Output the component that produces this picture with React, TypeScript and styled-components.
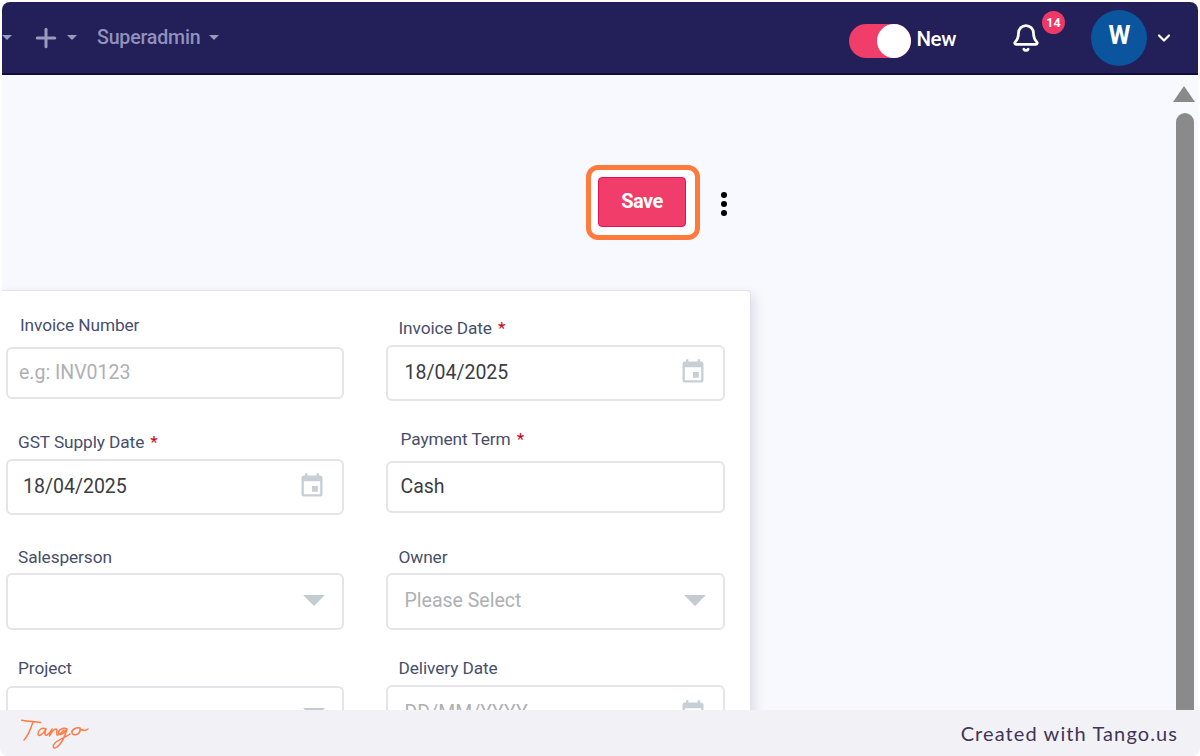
import styled, { createGlobalStyle } from "styled-components";
import { MdEvent } from "react-icons/md";
import { Bell, ChevronDown, Plus } from "lucide-react";

const GlobalStyle = createGlobalStyle`
  html, body {
    margin: 0;
    background: #ffffff;
    font-family: Roboto, "Liberation Sans", sans-serif;
  }
  * {
    box-sizing: border-box;
  }
`;

const Frame = styled.div`
  width: 1200px;
  height: 756px;
  display: flex;
  flex-direction: column;
  overflow: hidden;
  background: #ffffff;
`;

const Screen = styled.div`
  height: 708px;
  margin: 2px 2px 0;
  display: flex;
  flex-direction: column;
  overflow: hidden;
  border-radius: 8px 8px 0 0;
  background: #f8f9fe;
`;

const TopBar = styled.header`
  height: 73px;
  flex-shrink: 0;
  display: flex;
  align-items: center;
  padding-right: 24px;
  background: #231f58;
  border-bottom: 2px solid #100c40;
  color: #8f8fb8;
`;

const Caret = styled.span<{ $color?: string; $size?: number }>`
  width: 0;
  height: 0;
  border-left: ${(p) => p.$size ?? 5}px solid transparent;
  border-right: ${(p) => p.$size ?? 5}px solid transparent;
  border-top: ${(p) => p.$size ?? 5}px solid ${(p) => p.$color ?? "#9a9abd"};
`;

const SelectCaret = styled(Caret)`
  margin-right: -3px;
`;

const NavLeft = styled.div`
  display: flex;
  align-items: center;
  flex: 1;
`;

const AddButton = styled.div`
  display: flex;
  align-items: center;
  gap: 6px;
  margin-left: 19px;
`;

const NavLink = styled.div`
  display: flex;
  align-items: center;
  gap: 9px;
  margin-left: 20px;
  font-size: 19.6px;
  font-weight: 500;
  letter-spacing: -0.2px;
  color: #8f92bd;
`;

const Toggle = styled.div`
  width: 62px;
  height: 34px;
  margin-top: 7px;
  display: flex;
  justify-content: flex-end;
  border-radius: 17px;
  background: #f03d6a;
`;

const Knob = styled.span`
  width: 34px;
  height: 34px;
  border-radius: 50%;
  background: #ffffff;
`;

const ToggleLabel = styled.span`
  margin-left: 5px;
  margin-top: 3px;
  font-size: 20.5px;
  font-weight: 500;
  letter-spacing: -0.4px;
  color: #ffffff;
`;

const BellWrap = styled.div`
  position: relative;
  width: 30px;
  height: 30px;
  margin-left: 55px;
  color: #ffffff;
`;

const Badge = styled.span`
  position: absolute;
  top: -12px;
  left: 31px;
  width: 23px;
  height: 23px;
  display: flex;
  align-items: center;
  justify-content: center;
  border-radius: 50%;
  background: #ee3866;
  color: #ffffff;
  font-size: 12.5px;
  font-weight: 700;
`;

const Avatar = styled.div`
  width: 56px;
  height: 56px;
  margin-left: 50px;
  display: flex;
  align-items: center;
  justify-content: center;
  border-radius: 50%;
  background: #0b549e;
  color: #ffffff;
  font-size: 25px;
  font-weight: 700;
  padding: 0 0 4px 1px;
`;

const AvatarChevron = styled.span`
  display: flex;
  margin-left: 7px;
  color: #ffffff;
`;

const Body = styled.div`
  flex: 1;
  min-height: 0;
  display: flex;
`;

const Main = styled.main`
  flex: 1;
  min-width: 0;
`;

const Actions = styled.div`
  display: flex;
  align-items: center;
  height: 215px;
  padding: 90px 0 50px 584px;
`;

const SaveHighlight = styled.div`
  padding: 7px 9px 8px 7px;
  border: 5px solid #ff7a3d;
  border-radius: 12px;
  background: #ffffff;
`;

const SaveButton = styled.button`
  width: 88px;
  height: 50px;
  padding: 0 0 3px;
  border: 1px solid #e8114f;
  border-radius: 4px;
  background: #f03d6a;
  color: #ffffff;
  font-family: inherit;
  font-size: 20px;
  font-weight: 700;
  letter-spacing: -0.5px;
`;

const Kebab = styled.div`
  display: flex;
  flex-direction: column;
  gap: 3px;
  margin: 2px 0 0 21px;
`;

const Dot = styled.span`
  width: 6px;
  height: 6px;
  border-radius: 50%;
  background: #000000;
`;

const Card = styled.section`
  width: 749px;
  height: 560px;
  display: flex;
  gap: 42px;
  padding: 0 25px 0 4px;
  background: #ffffff;
  border: 1px solid #e2e3e8;
  border-left: 0;
  border-radius: 0 4px 4px 0;
  box-shadow: 3px 5px 12px rgba(60, 64, 100, 0.16);
`;

const Column = styled.div<{ $width: number }>`
  width: ${(p) => p.$width}px;
  display: flex;
  flex-direction: column;
`;

const Field = styled.div<{ $top: number }>`
  margin-top: ${(p) => p.$top}px;
`;

const Label = styled.label<{ $indent: number; $gap: number }>`
  display: block;
  height: 20px;
  line-height: 22px;
  margin-bottom: ${(p) => p.$gap}px;
  padding-left: ${(p) => p.$indent}px;
  font-size: 17.3px;
  letter-spacing: -0.1px;
  color: #474f6c;
`;

const Required = styled.span`
  margin-left: 6px;
  color: #d0021b;
`;

const Control = styled.div<{ $height: number; $indent: number; $muted?: boolean }>`
  height: ${(p) => p.$height}px;
  display: flex;
  align-items: center;
  justify-content: space-between;
  padding: 0 20px 2px ${(p) => p.$indent}px;
  border: 2px solid #e4e5e8;
  border-radius: 6px;
  background: #ffffff;
  font-size: 19.5px;
  color: ${(p) => (p.$muted ? "#aeb0b4" : "#3a3d42")};
`;

const DateIcon = styled(MdEvent)`
  color: #c8ced6;
  font-size: 28px;
  margin-right: -4px;
`;

const ScrollTrack = styled.aside`
  width: 26px;
  flex-shrink: 0;
  display: flex;
  flex-direction: column;
  align-items: center;
  padding-top: 11px;
  gap: 11px;
`;

const ScrollArrow = styled.span`
  width: 0;
  height: 0;
  margin-right: 2px;
  border-left: 11px solid transparent;
  border-right: 11px solid transparent;
  border-bottom: 16px solid #8a8a8a;
`;

const ScrollThumb = styled.span`
  width: 18px;
  flex: 1;
  border-radius: 9px 9px 0 0;
  background: #8a8a8a;
`;

const Footer = styled.footer`
  height: 46px;
  flex-shrink: 0;
  display: flex;
  align-items: center;
  justify-content: space-between;
  padding: 0 22px 0 20px;
  background: #f2f1f6;
  border-radius: 0 0 8px 8px;
`;

const FooterText = styled.span`
  font-family: Lato, "Noto Sans", sans-serif;
  font-size: 20px;
  letter-spacing: 1.1px;
  color: #3f3558;
`;

const TangoLogo = () => (
  <svg width="70" height="34" viewBox="0 0 70 34" fill="none" stroke="#ff7a45" strokeWidth="1.5" strokeLinecap="round" strokeLinejoin="round">
    <path d="M1.700 4.300C8 5.500 14 5.500 20.700 6.500" />
    <path d="M13 6C11 12 8 20 4 24" />
    <path d="M26 13C22 11 18 14 18 18C18 21 23 19 26 13C25 16 24 20 27 19C29 18 31 15 32 13C31 15 29.500 18 29.500 20C31 17 34 13 36 13C38 13 36 18 37 19C39 20 42 16 44 14" />
    <path d="M47 13C43 11 38 14 38.500 17C39 20 44 18 47 13C45 20 41 28 37 31C33 34 32 30 35 27C38 24 44 22 50 18" />
    <path d="M60 12C56 11 51 14 52 17C53 20 59 19 60 15C60.500 13 59.500 12 59 12C62 15 65 15 68 13" />
  </svg>
);

type FieldData = {
  label: string;
  required?: boolean;
  top: number;
  labelIndent: number;
  gap: number;
  height: number;
  indent: number;
  text: string;
  muted?: boolean;
  icon?: "date" | "caret";
};

const fieldsLeft: FieldData[] = [
  { label: "Invoice Number", top: 23, labelIndent: 14, gap: 13, height: 52, indent: 11, text: "e.g: INV0123", muted: true },
  { label: "GST Supply Date", required: true, top: 32, labelIndent: 12, gap: 8, height: 56, indent: 15, text: "18/04/2025", icon: "date" },
  { label: "Salesperson", top: 31, labelIndent: 12, gap: 7, height: 57, indent: 16, text: "", icon: "caret" },
  { label: "Project", top: 27, labelIndent: 12, gap: 9, height: 57, indent: 16, text: "", icon: "caret" },
];

const fieldsRight: FieldData[] = [
  { label: "Invoice Date", required: true, top: 26, labelIndent: 13, gap: 8, height: 56, indent: 17, text: "18/04/2025", icon: "date" },
  { label: "Payment Term", required: true, top: 27, labelIndent: 15, gap: 13, height: 52, indent: 13, text: "Cash" },
  { label: "Owner", top: 33, labelIndent: 13, gap: 7, height: 57, indent: 17, text: "Please Select", muted: true, icon: "caret" },
  { label: "Delivery Date", top: 27, labelIndent: 13, gap: 8, height: 57, indent: 17, text: "DD/MM/YYYY", muted: true, icon: "date" },
];

function FormField({ field }: { field: FieldData }) {
  return (
    <Field $top={field.top}>
      <Label $indent={field.labelIndent} $gap={field.gap}>
        {field.label}
        {field.required && <Required>*</Required>}
      </Label>
      <Control $height={field.height} $indent={field.indent} $muted={field.muted}>
        <span>{field.text}</span>
        {field.icon === "date" && <DateIcon />}
        {field.icon === "caret" && <SelectCaret $color="#c5cbd3" $size={11} />}
      </Control>
    </Field>
  );
}

export default function App() {
  return (
    <>
      <GlobalStyle />
      <Frame>
        <Screen>
          <TopBar>
            <NavLeft>
              <Caret />
              <AddButton>
                <Plus size={30} strokeWidth={2.4} color="#9a9abd" />
                <Caret />
              </AddButton>
              <NavLink>
                Superadmin
                <Caret />
              </NavLink>
            </NavLeft>
            <Toggle>
              <Knob />
            </Toggle>
            <ToggleLabel>New</ToggleLabel>
            <BellWrap>
              <Bell size={30} strokeWidth={2.2} />
              <Badge>14</Badge>
            </BellWrap>
            <Avatar>W</Avatar>
            <AvatarChevron>
              <ChevronDown size={20} strokeWidth={2.6} />
            </AvatarChevron>
          </TopBar>
          <Body>
            <Main>
              <Actions>
                <SaveHighlight>
                  <SaveButton>Save</SaveButton>
                </SaveHighlight>
                <Kebab>
                  <Dot />
                  <Dot />
                  <Dot />
                </Kebab>
              </Actions>
              <Card>
                <Column $width={338}>
                  {fieldsLeft.map((f) => (
                    <FormField key={f.label} field={f} />
                  ))}
                </Column>
                <Column $width={340}>
                  {fieldsRight.map((f) => (
                    <FormField key={f.label} field={f} />
                  ))}
                </Column>
              </Card>
            </Main>
            <ScrollTrack>
              <ScrollArrow />
              <ScrollThumb />
            </ScrollTrack>
          </Body>
        </Screen>
        <Footer>
          <TangoLogo />
          <FooterText>Created with Tango.us</FooterText>
        </Footer>
      </Frame>
    </>
  );
}
